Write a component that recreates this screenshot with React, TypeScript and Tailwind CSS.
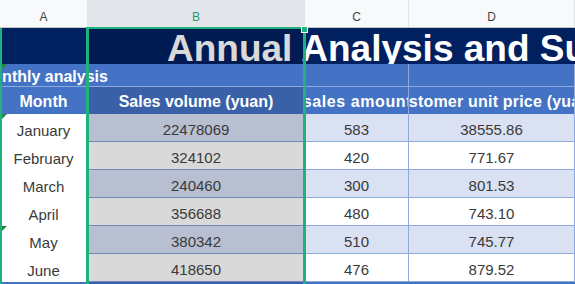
import React from "react";

const rows = [
  { month: "January", sales: "22478069", online: "583", price: "38555.86", flag: true },
  { month: "February", sales: "324102", online: "420", price: "771.67", flag: false },
  { month: "March", sales: "240460", online: "300", price: "801.53", flag: false },
  { month: "April", sales: "356688", online: "480", price: "743.10", flag: false },
  { month: "May", sales: "380342", online: "510", price: "745.77", flag: true },
  { month: "June", sales: "418650", online: "476", price: "879.52", flag: false },
];

function Flag() {
  return (
    <span className="absolute left-[2px] top-0 h-0 w-0 border-r-[5px] border-t-[5px] border-r-transparent border-t-[#1b8a3a]" />
  );
}

export default function App() {
  return (
    <div className="relative h-[284px] w-[575px] overflow-hidden bg-white font-['Liberation_Sans',Arial,sans-serif]">
      {/* column letters */}
      <div className="flex h-[28px] border-b border-[#c4c7c5] bg-[#f8f9fa] text-[12px] text-[#444]">
        <div className="flex w-[87px] items-end justify-center pb-[1px]">A</div>
        <div className="flex w-[218px] items-end justify-center bg-[#e3e5ea] pb-[1px] text-[#1a9e6b]">B</div>
        <div className="flex w-[104px] items-end justify-center border-r border-[#e0e2e4] pb-[1px]">C</div>
        <div className="flex w-[166px] items-end justify-center border-r border-[#e0e2e4] pb-[1px]">D</div>
        <div className="flex-1" />
      </div>

      {/* title */}
      <div className="relative h-[36px] overflow-hidden bg-[#002060] pl-[167px] pt-[2px]">
        <div className="whitespace-nowrap text-[37px] font-bold leading-[37px] text-white">
          Annual Analysis and Summary of Sales
        </div>
        <div className="absolute bottom-0 left-[87px] top-0 w-[218px] bg-black/15" />
      </div>

      {/* section */}
      <div className="flex h-[23px] border-b border-[#8ea9db] bg-[#4472c4] text-[16px] font-bold leading-[18px] text-white">
        <div className="relative flex w-[87px] items-end">
          <Flag />
          <span className="ml-[-21px] whitespace-nowrap">Monthly analysis</span>
        </div>
        <div className="w-[218px]" />
        <div className="w-[104px] border-r border-[#8ea9db]" />
        <div className="w-[166px] border-r border-[#8ea9db]" />
        <div className="flex-1" />
      </div>

      {/* table header */}
      <div className="flex h-[27px] text-[16px] font-bold leading-[18px] text-white">
        <div className="flex w-[87px] items-center justify-center overflow-hidden whitespace-nowrap bg-[#4472c4] pt-[2px]">Month</div>
        <div className="flex w-[218px] items-center justify-center overflow-hidden whitespace-nowrap bg-[#3a61a7] pt-[2px]">Sales volume (yuan)</div>
        <div className="flex w-[104px] items-center justify-center overflow-hidden whitespace-nowrap border-r border-[#8ea9db] bg-[#4472c4] pt-[2px] tracking-[0.6px]">Online sales amount (yuan)</div>
        <div className="flex w-[166px] items-center justify-center overflow-hidden whitespace-nowrap border-r border-[#8ea9db] bg-[#4472c4] pt-[2px] tracking-[0.2px]">Customer unit price (yuan)</div>
        <div className="flex-1 bg-[#4472c4]" />
      </div>

      {/* data */}
      {rows.map((r, i) => {
        const odd = i % 2 === 0;
        return (
          <div key={r.month} className="flex h-[28px] text-[15px] leading-[17px] text-[#3a3a3a]">
            <div className="relative flex w-[87px] items-center justify-center bg-white pt-[4px]">
              {r.flag && <Flag />}
              {r.month}
            </div>
            <div className={`flex w-[218px] items-center justify-center border-b border-[#7189b9] pt-[4px] ${odd ? "bg-[#b8bfd0]" : "bg-[#d9d9d9]"}`}>
              {r.sales}
            </div>
            <div className={`flex w-[104px] items-center justify-center border-b border-r border-[#8ea9db] pt-[4px] ${odd ? "bg-[#d9e1f2]" : "bg-white"}`}>
              {r.online}
            </div>
            <div className={`flex w-[166px] items-center justify-center border-b border-r border-[#8ea9db] pt-[4px] ${odd ? "bg-[#d9e1f2]" : "bg-white"}`}>
              {r.price}
            </div>
            <div className={`flex-1 border-b border-[#8ea9db] ${odd ? "bg-[#d9e1f2]" : "bg-white"}`} />
          </div>
        );
      })}

      {/* next row peeking in */}
      <div className="flex h-[28px]">
        <div className="w-[87px] bg-[#4472c4]" />
        <div className="w-[218px] bg-[#3a61a7]" />
        <div className="flex-1 bg-[#4472c4]" />
      </div>

      {/* selection overlay */}
      <div className="absolute bottom-0 left-0 top-[28px] w-[2px] bg-[#1fb27a]" />
      <div className="absolute bottom-[-4px] left-[86px] top-[27px] w-[220px] border-[3px] border-t-2 border-[#1fb27a]" />
      <div className="absolute left-[301px] top-[26px] h-[7px] w-[7px] border border-white bg-[#1fb27a]" />
    </div>
  );
}
